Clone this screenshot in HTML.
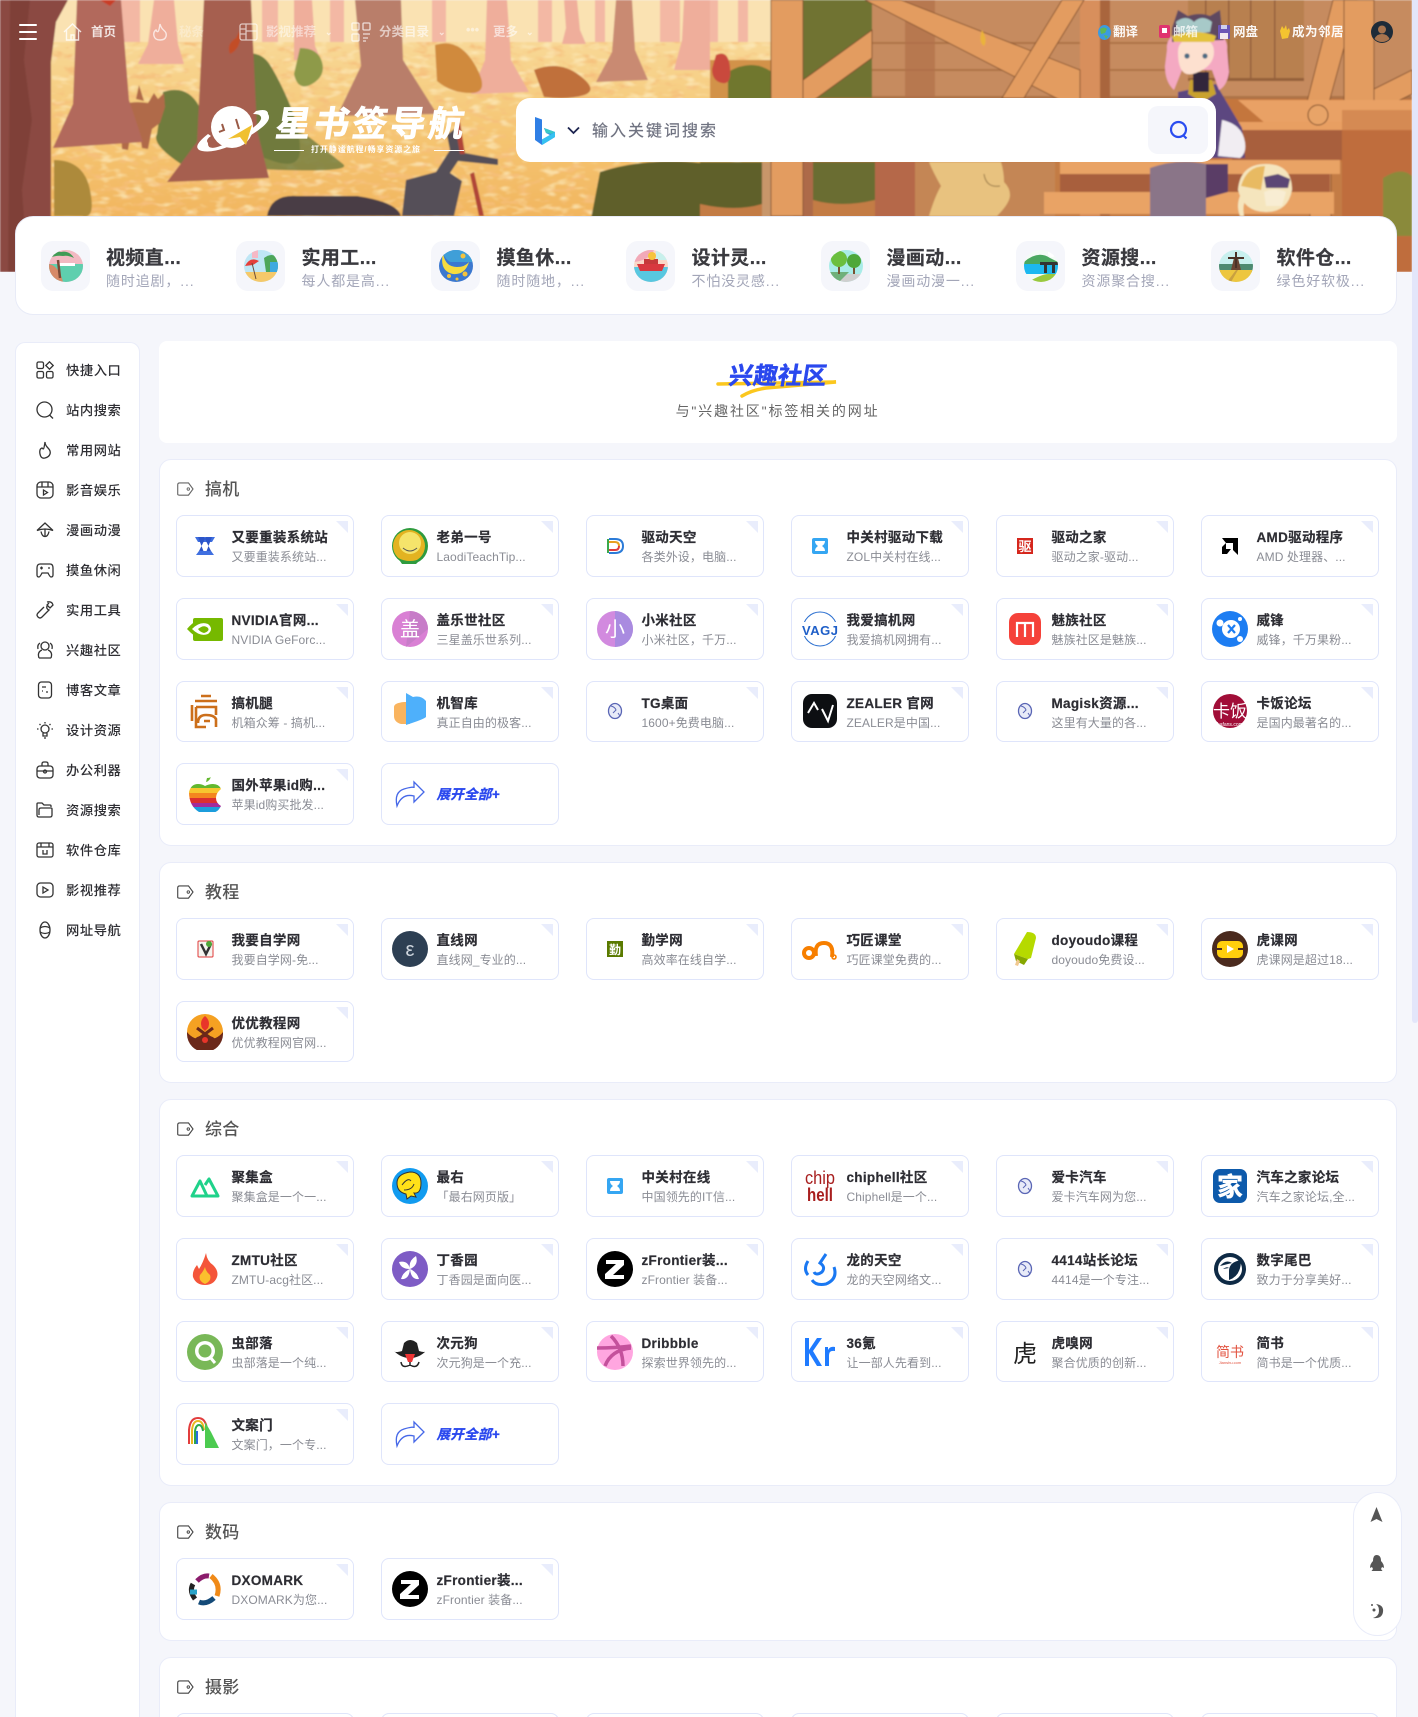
<!DOCTYPE html>
<html lang="zh"><head><meta charset="utf-8"><title>星书签导航</title>
<style>
*{box-sizing:border-box;margin:0;padding:0}
html,body{width:1418px;height:1717px;overflow:hidden;background:#f5f6fb}
body{position:relative;font-family:"Liberation Sans","Noto Sans CJK SC",sans-serif;color:#333}
.abs{position:absolute}
#sb{left:1412px;top:0;width:6px;height:1023px;background:#e3e6fa;border-radius:0 0 3px 3px}
#hd{left:0;top:0;width:1412px;height:272px;overflow:hidden}
.n{position:absolute;top:23px;line-height:18px;font-size:12.5px;font-weight:700;color:#fff;opacity:.82;white-space:nowrap}
.nr{opacity:.95}
#search{left:516px;top:98px;width:700px;height:64px;background:#fff;border-radius:14px}
#ph{left:592px;top:120px;font-size:16px;letter-spacing:2px;color:#6f7280;line-height:24px;-webkit-text-stroke:.2px #6f7280}
#sbtn{left:1148px;top:106px;width:60px;height:48px;background:#f5f6fb;border-radius:10px}
#cat{left:14.5px;top:216px;width:1382px;height:99px;background:#fff;border:1px solid #e8ebf7;border-radius:18px}
.ci{position:absolute;top:241px;width:49px;height:50px;background:#f5f6fb;border-radius:12px}
.ci svg{position:absolute;left:7.5px;top:9px}
.ct{position:absolute;top:246px;font-size:19px;font-weight:700;color:#3a3a3f;line-height:25px;letter-spacing:.4px;white-space:nowrap;-webkit-text-stroke:.25px #3a3a3f}
.cs{position:absolute;top:271px;font-size:14px;color:#a3a6b8;line-height:20px;letter-spacing:.85px;white-space:nowrap}
#side{left:15px;top:342px;width:125px;height:1375px;background:#fff;border:1px solid #e9ecf9;border-bottom:0;border-radius:10px 10px 0 0}
.si{position:absolute;left:36px;width:18px;height:18px}
.st{position:absolute;left:66px;font-size:13.3px;line-height:20px;color:#2e2e33;letter-spacing:.55px;font-weight:500;white-space:nowrap}
#title{left:158.5px;top:341px;width:1238px;height:102px;background:#fff;border-radius:8px}
#t1{left:0;width:1555px;text-align:center;top:361px;font-size:24px;line-height:32px;font-weight:700;color:#2a48ee;letter-spacing:.5px;-webkit-text-stroke:.5px #2a48ee}
#t1 span{display:inline-block;transform:skewX(-9deg)}
#t2{left:0;width:1555px;text-align:center;top:400px;font-size:14px;line-height:22px;color:#666;letter-spacing:1.85px}
#main{left:159px;top:459.3px;width:1237.5px;height:1257.7px;overflow:hidden}
.sec{position:relative;background:#fff;border:1px solid #e9ecf9;border-radius:12px;padding:55px 16px 20px;margin-bottom:16px}
.h{position:absolute;left:45px;top:18px;line-height:24px;font-size:17px;font-weight:500;color:#555;letter-spacing:.3px}
.tag{position:absolute;left:16px;top:22px}
.g{display:grid;grid-template-columns:repeat(6,178px);column-gap:27px;grid-auto-rows:61.7px;row-gap:21px}
.c{position:relative;background:#fff;border:1px solid #dfe5fb;border-radius:8px}
.c::after{content:"";position:absolute;right:5px;top:5px;border-style:solid;border-width:0 12px 12px 0;border-color:transparent #e9edfc transparent transparent}
.c>svg{position:absolute;left:9.5px;top:11.8px}
.c b{position:absolute;left:54.5px;top:12px;font-size:13.5px;line-height:20px;font-weight:700;color:#2d2d33;letter-spacing:.3px;white-space:nowrap;-webkit-text-stroke:.2px #2d2d33}
.c span{position:absolute;left:54.5px;top:31px;font-size:12px;line-height:20px;color:#8a8c94;letter-spacing:.1px;white-space:nowrap}
.x::after{display:none}
.x>svg{left:8px}
.x b{top:20.5px;left:54.5px;color:#2a48ee;font-style:italic;-webkit-text-stroke:.3px #2a48ee}
#fl{left:1352.5px;top:1492px;width:49px;height:144px;background:#fff;border:1px solid #e9ecf9;border-radius:25px}
</style></head><body>

<div class="abs" id="sb"></div>

<div class="abs" id="hd">
<svg width="1412" height="272" viewBox="0 0 1412 272" style="position:absolute;left:0;top:0">
<defs>
<linearGradient id="gd" x1="0" y1="0" x2="0" y2="1"><stop offset="0" stop-color="#f8d896"/><stop offset=".4" stop-color="#f5c572"/><stop offset="1" stop-color="#efab52"/></linearGradient>
<filter id="lf" x="0" y="0" width="100%" height="100%"><feTurbulence type="fractalNoise" baseFrequency=".06 .15" numOctaves="3" seed="5"/><feColorMatrix values="0 0 0 0 .92  0 0 0 0 .52  0 0 0 0 .2  3.5 0 0 0 -1.85"/></filter>
<filter id="lf2" x="0" y="0" width="100%" height="100%"><feTurbulence type="fractalNoise" baseFrequency=".07 .16" numOctaves="2" seed="11"/><feColorMatrix values="0 0 0 0 .98  0 0 0 0 .84  0 0 0 0 .52  0 3.5 0 0 -1.8"/></filter>
<filter id="bl"><feGaussianBlur stdDeviation=".7"/></filter>
</defs>
<g filter="url(#bl)">
<rect width="1412" height="272" fill="#c4763e"/>
<rect x="0" y="0" width="800" height="56" fill="#fae2b2"/>
<g fill="#f3b8a4">
<rect x="120" y="0" width="20" height="56"/><rect x="262" y="0" width="16" height="56"/><rect x="330" y="0" width="14" height="56"/><rect x="432" y="0" width="14" height="56"/><rect x="538" y="0" width="14" height="56"/><rect x="595" y="0" width="10" height="56"/><rect x="660" y="0" width="20" height="56"/><rect x="700" y="0" width="18" height="56"/><rect x="738" y="0" width="10" height="56"/>
</g>
<rect x="0" y="42" width="800" height="230" fill="url(#gd)"/>
<rect x="52" y="42" width="760" height="230" filter="url(#lf)"/>
<rect x="52" y="42" width="760" height="230" filter="url(#lf2)" opacity=".7"/>
<g fill="#efae9b">
<path d="M154 0h20l4 44 6 20h-46l10-20z"/><path d="M294 0h18l3 46 6 14h-27z"/><path d="M487 0h20l4 60 18 32-58 2 14-34z"/><path d="M564 0h13l3 30 6 14h-24l4-16z"/><path d="M684 0h26v70h-36l8-30z"/>
</g>
<path d="M616 0h16l3 50 13 30-52 2 16-30z" fill="#c98a72"/>
<g fill="#6f7b3c">
<path d="M240 55q20-6 30 10t20 40 10 45-30 10-30-10-14-50z"/><path d="M163 92q24-8 36 14t12 50-30 8-24-30z"/><path d="M253 130q40-6 60 10t30 24-60 6-30-14z" opacity=".8"/>
</g>
<path d="M300 48q18 0 22 14t-10 22-18-10z" fill="#8e9a48"/>
<path d="M534 70q25-10 45 5t5 20-40 2z" fill="#c0703a"/>
<path d="M435 45q24-8 40 20t-4 28-34-12z" fill="#d08a3c"/>
<path d="M600 172q50-16 110-8v60H590z" fill="#5e5f2c"/>
<path d="M54 160q30 0 36 30t-8 26H54z" fill="#ad8a3a"/>
<g fill="#b06a48"><path d="M118 108q10-8 30-5l6-10 4 6 6-6 1 14 -5 16-8 6-4 20-6-1-2-14-10 4-2 12-6-1-1-18z"/><path d="M139 85l5 16-8-2z"/></g>
<path d="M77 0h44l8 100 14 42-90 6 20-44z" fill="#b2695c"/>
<path d="M204 0h47l6 130 12 48-102 4 30-40z" fill="#a65e50"/>
<path d="M355 0h46l2 60 34 54-100 2 24-50z" fill="#b97e6b"/>
<path d="M0 0h68l-12 22-5 40v210H0z" fill="#8b4a42"/>
<path d="M10 0h20l-6 60 8 60-10 70 6 82H8z" fill="#7a3d36" opacity=".7"/>
<path d="M267 216q4-22 30-20l60 0q40 6 44 20z" fill="#4a3c44"/>
<path d="M447 135l10-8 8 26 33 6 0 6-40-4 -8 12 12 8 -8 35H402l4-36 30-8 14-22z" fill="#545058"/>
<path d="M455 125l5-3 5 32h-5z" fill="#b04538"/><path d="M474 172l10 44h-5l-9-42z" fill="#b04538"/>
<rect x="710" y="60" width="62" height="40" fill="#d2924a"/>
<path d="M728 72q24-14 44 0v30h-44z" fill="#70772f"/>
<path d="M716 55q12-6 14 12t-8 16-10-14z" fill="#c94a3c"/>
<rect x="700" y="162" width="712" height="110" fill="#c37b45"/>
<path d="M700 162h62v42q-26 8-62 0z" fill="#5f602c"/>
<rect x="762" y="162" width="31" height="110" fill="#c8966a"/><rect x="793" y="162" width="20" height="110" fill="#ad6a4a"/>
<path d="M813 162h62v38q-34 8-62 0z" fill="#6a6d32"/>
<rect x="875" y="162" width="40" height="110" fill="#b5684a"/>
<rect x="915" y="162" width="140" height="110" fill="#c48655"/>
<rect x="803" y="0" width="70" height="98" fill="#6f7330"/>
<rect x="872" y="0" width="540" height="98" fill="#c68b5e"/>
<g fill="#ae7346"><rect x="872" y="42" width="430" height="2"/><rect x="872" y="69" width="430" height="2"/><rect x="872" y="96" width="540" height="3"/></g>
<rect x="905" y="0" width="30" height="98" fill="#b07048" opacity=".7"/>
<rect x="1188" y="0" width="116" height="80" fill="#b88050"/>
<g fill="#94603a"><rect x="1205" y="0" width="1.5" height="80"/><rect x="1228" y="0" width="1.5" height="80"/><rect x="1250" y="0" width="1.5" height="80"/><rect x="1274" y="0" width="1.5" height="80"/><rect x="1188" y="78" width="116" height="3"/></g>
<rect x="1080" y="0" width="30" height="216" fill="#d88f5c"/><rect x="1100" y="0" width="10" height="216" fill="#a9653e"/>
<g fill="#e39c60" stroke="#7a4a2a" stroke-width=".8">
<path d="M865 0h36L1080 70v30h-20z"/><path d="M1062 0h22l-60 98h-22z"/><path d="M803 80l69-50v28l-69 50z"/>
<rect x="771" y="0" width="32" height="216"/>
<path d="M1333 0h24l-30 110h-22z"/><path d="M1412 70v24l-40 20v-24z"/>
<rect x="1344" y="0" width="30" height="112"/>
<rect x="1310" y="118" width="21" height="100"/>
</g>
<path d="M1238 100h174v24h-146z" fill="#e9a165"/>
<rect x="1238" y="122" width="104" height="8" fill="#e89f62"/>
<rect x="1232" y="130" width="110" height="30" fill="#a85e3c"/>
<rect x="1060" y="160" width="280" height="14" fill="#e9a365"/>
<rect x="1060" y="174" width="270" height="18" fill="#a85f3c"/>
<rect x="1044" y="192" width="290" height="22" fill="#e9a365"/>
<rect x="1342" y="130" width="70" height="142" fill="#bf6d3e"/>
<rect x="1342" y="110" width="70" height="20" fill="#d58a52"/>
<path d="M1383 178q18-12 29-2v60h-29z" fill="#8a8a3a"/>
<circle cx="1318" cy="115" r="10" fill="#e8a468" stroke="#7a4a2a"/>
<path d="M929 162h72q3 10 3 20 6 6 6 13 0 8-13 21h-68q6-20 12-30-8-14-12-24z" fill="#e8c27f"/>
<path d="M1000 186q-14 2-16-12" stroke="#9a7a48" fill="none"/>
<path d="M1150 168q28-10 56-4l0 60h-56z" fill="#8a7588"/>
<path d="M1206 164h22l0 28-22 6z" fill="#5a3c66"/>
<path d="M1178 92l38-8 26 44 3 30h-67z" fill="#5c4780"/>
<path d="M1222 120q18 4 22 18t-4 20l-22-2z" fill="#f1edf2"/>
<path d="M1190 80h22l4 14-14 8-14-8z" fill="#c9a22e"/>
<rect x="1193" y="72" width="16" height="20" fill="#33283a"/>
<path d="M1167 50q-2-20 30-20t30 20l2 22q-2 14-10 18l-7-20-30 0-8 20q-9-8-9-24z" fill="#f4a9c2"/>
<path d="M1178 52q0-14 18-14t18 14-18 21-18-21z" fill="#fde0cf"/>
<path d="M1172 28l6-18 10 6q12-4 22 0l10-6 2 20 2 10-52 2z" fill="#5e4a60"/>
<path d="M1176 22q10-8 18 0 8-8 18 0l-2 10-16 2-16-2z" fill="#a7c9c8"/>
<path d="M1172 36q24-8 44 0l-2 6h-40z" fill="#e3c23e"/>
<circle cx="1187" cy="56" r="2.600" fill="#4b6a82"/><circle cx="1205" cy="56" r="2.600" fill="#4b6a82"/>
<path d="M1238 190q2-26 28-26t26 26q-4 22-26 22t-28-22z" fill="#f5e5bd"/>
<path d="M1241 186q6-20 24-20l-4 24z" fill="#e8ba62"/>
<path d="M1264 177l14-3 12 5-2 9-22 0z" fill="#5b4774"/>
<path d="M1264 192q11-5 22 0l-4 14-16 0z" fill="#f8edd3"/>
<path d="M1240 196q-4 10 0 20h4q-2-10 2-18z" fill="#f5e5bd"/>
<path d="M236 38q8-16 4-6 2 16-10 22-4-10 6-16z" fill="#c24e28"/>
<path d="M982 30q6 10 2 16-6-4-2-16z" fill="#eab33a"/>
<path d="M100 0h16l-6 6z" fill="#c93e26"/>
</g>
</svg>

<svg class="abs" style="left:19px;top:24px" width="18" height="16" fill="#fff"><rect width="18" height="2" rx="1" y="0"/><rect width="18" height="2" rx="1" y="7"/><rect width="18" height="2" rx="1" y="14"/></svg>
<svg class="abs" style="left:63px;top:23px;opacity:.8" width="19" height="18" fill="none" stroke="#fff" stroke-width="1.4"><path d="M1 9l8.500-8 8.500 8M3.500 7v10h12V7M8 17v-5h3v5"/></svg>
<div class="n" style="left:91px">首页</div>
<svg class="abs" style="left:153px;top:23px;opacity:.7" width="14" height="18" fill="none" stroke="#fff" stroke-width="1.4"><path d="M7 1q1 4 4 6.500t2 6-6 3.500-6-4 2-6q1 2 2 1.500T7 1z"/></svg>
<div class="n" style="left:179px;opacity:.3">秘条</div>
<svg class="abs" style="left:239px;top:23px;opacity:.65" width="19" height="18" fill="none" stroke="#fff" stroke-width="1.3"><rect x="1" y="1" width="17" height="16" rx="2"/><path d="M7 1v16M1 6h6M1 11h6M7 8h11"/></svg>
<div class="n" style="left:266px;opacity:.5">影视推荐</div>
<div class="n" style="left:325px;opacity:.6;font-size:9px">⌄</div>
<svg class="abs" style="left:351px;top:22px;opacity:.75" width="20" height="20" fill="none" stroke="#fff" stroke-width="1.3"><rect x="1" y="1" width="7" height="7" rx="1"/><rect x="12" y="1" width="7" height="7" rx="1"/><rect x="1" y="12" width="7" height="7" rx="1"/><path d="M12 12h7M12 16h5M12 19h3"/></svg>
<div class="n" style="left:379px;opacity:.6">分类目录</div>
<div class="n" style="left:438px;opacity:.6;font-size:9px">⌄</div>
<div class="n" style="left:466px;top:21px;opacity:.5;letter-spacing:0">•••</div>
<div class="n" style="left:493px;opacity:.6">更多</div>
<div class="n" style="left:526px;opacity:.6;font-size:9px">⌄</div>

<svg class="abs" style="left:1098px;top:25px" width="13" height="15"><ellipse cx="6.500" cy="7.500" rx="6.500" ry="7.500" fill="#3b9be0"/><path d="M2 4q4-3 7 0l-2 4-4 1z" fill="#5cb85c"/><path d="M6 10l4 1-2 3z" fill="#5cb85c"/></svg>
<div class="n nr" style="left:1113px">翻译</div>
<svg class="abs" style="left:1159px;top:25px" width="11" height="13"><rect width="11" height="13" rx="2" fill="#e0336f"/><rect x="3" y="3" width="5" height="5" fill="#fff"/></svg>
<div class="n nr" style="left:1173px;opacity:.75">邮箱</div>
<svg class="abs" style="left:1218px;top:25px" width="12" height="14"><rect width="12" height="14" rx="1" fill="#6a55b5"/><rect x="2" y="8" width="8" height="6" fill="#f0e8ef"/><rect x="3" y="0" width="6" height="4" fill="#cfd0ef"/></svg>
<div class="n nr" style="left:1233px">网盘</div>
<svg class="abs" style="left:1278px;top:25px" width="12" height="14"><path d="M2 6l2-5 2 3 2-4 1 5 2-2 1 3-2 7-6 1z" fill="#f4c430"/></svg>
<div class="n nr" style="left:1292px;letter-spacing:.5px">成为邻居</div>
<svg class="abs" style="left:1371px;top:21px" width="22" height="22"><circle cx="11" cy="11" r="11" fill="#1e2b38"/><circle cx="11" cy="8.500" r="4" fill="#a8744e"/><path d="M3.500 18q2-5 7.500-5t7.500 5q-3.500 3-7.500 3t-7.500-3z" fill="#a8744e"/></svg>

<svg class="abs" style="left:196px;top:102px" width="76" height="56" viewBox="0 0 76 56">
<circle cx="36" cy="25" r="21" fill="#fff"/>
<path d="M12 32Q-6 46 6 49 22 52 50 36T72 12Q72 6 60 9l-3 3q9 0 8 5-2 7-28 21T12 41q-3-3 3-7z" fill="#fff"/>
<path d="M26 22l2 6-5 2M40 17l3 10" stroke="#9a5a46" stroke-width="2" fill="none"/>
<path d="M32 37l24-14-6 20-6-8z" fill="#f0c030"/>
</svg>
<div class="abs" style="left:276px;top:102px;font-size:35px;line-height:46px;font-weight:700;color:#fff;letter-spacing:3.2px;white-space:nowrap;-webkit-text-stroke:.7px #fff;transform:skewX(-9deg)">星书签导航</div>
<div class="abs" style="left:274px;top:150px;width:30px;height:1px;background:#fff"></div>
<div class="abs" style="left:434px;top:150px;width:30px;height:1px;background:#fff"></div>
<div class="abs" style="left:311px;top:144px;font-size:8px;line-height:12px;font-weight:700;color:#fff;letter-spacing:.9px;white-space:nowrap">打开静谧航程/畅享资源之旅</div>
</div>

<div class="abs" id="search"></div>
<svg class="abs" style="left:534px;top:116px" width="22" height="30" viewBox="0 0 22 30"><path d="M1 1l7 2.500v20l8-4.500-4-2-2-5 11 4v5L8 29 1 24z" fill="#2f7fe5"/><path d="M8 23.500l13-7.500v5L8 29z" fill="#35c1f1"/><path d="M10 12l11 4-4 2-5-1z" fill="#38c8c8"/></svg>
<svg class="abs" style="left:567px;top:126px" width="13" height="9" fill="none" stroke="#1d2550" stroke-width="1.8"><path d="M1 1.500l5.500 5.500L12 1.500"/></svg>
<div class="abs" id="ph">输入关键词搜索</div>
<div class="abs" id="sbtn"></div>
<svg class="abs" style="left:1169px;top:120px" width="20" height="20" fill="none" stroke="#2a4df0" stroke-width="2.200"><circle cx="9.500" cy="9.500" r="7.500"/><path d="M14 15l3.500 3.500"/></svg>

<div class="abs" id="cat"></div>
<div class="ci" style="left:41px"><svg width="34" height="32" viewBox="0 0 34 32"><defs><clipPath id="e"><ellipse cx="17" cy="16" rx="17" ry="16"/></clipPath></defs><g clip-path="url(#e)"><rect width="34" height="32" fill="#f2b9c2"/><rect y="14" width="34" height="18" fill="#5fcfae"/><rect x="10" y="13" width="16" height="3" fill="#fff"/><path d="M0 14q10 2 14 18H0z" fill="#d78a68"/><path d="M9 10l2 18" stroke="#7a4a36" stroke-width="2.500"/><path d="M0 8q6-8 12-6 8-2 13 6-6-3-11-2-7-1-14 2z" fill="#3f9b55"/></g></svg></div>
<div class="ci" style="left:236px"><svg width="34" height="32" viewBox="0 0 34 32"><g clip-path="url(#e)"><rect width="34" height="32" fill="#bfe6f5"/><path d="M0 22h34v10H0z" fill="#f5c96a"/><path d="M20 8q8-6 14 0v14H22z" fill="#4da65a"/><path d="M26 12h8v10h-8z" fill="#3fa9e0"/><path d="M1 16q5-10 14-5l-6 4z" fill="#e53f3a"/><path d="M8 13l4 16" stroke="#6a4a36" stroke-width="1"/><path d="M8 0h6v8H8z" fill="#f5b8c5"/></g></svg></div>
<div class="ci" style="left:431px"><svg width="34" height="32" viewBox="0 0 34 32"><g clip-path="url(#e)"><rect width="34" height="32" fill="#3b78cf"/><path d="M2 0h32v12H12q-4 0-10-12z" fill="#3f9fd8"/><path d="M4 3q2 14 14 14 8 0 12-5-4 13-16 12Q0 21 4 3z" fill="#f7dc3e"/><g fill="#f5c33c"><circle cx="24" cy="6" r="2.500"/><circle cx="10" cy="26" r="2"/><circle cx="26" cy="24" r="2.500"/><circle cx="18" cy="29" r="1.500"/></g></g></svg></div>
<div class="ci" style="left:626px"><svg width="34" height="32" viewBox="0 0 34 32"><g clip-path="url(#e)"><rect width="34" height="32" fill="#fad8c8"/><path d="M0 0h20q-4 10-20 12z" fill="#f2a9b8"/><path d="M22 0h12v10H22z" fill="#c8f0ec"/><rect y="17" width="34" height="15" fill="#58c7e0"/><path d="M3 14h28l-3 7H6z" fill="#d8393f"/><rect x="10" y="9" width="14" height="5" fill="#c53a3a"/><circle cx="18" cy="6" r="4" fill="#f6c33c"/></g></svg></div>
<div class="ci" style="left:821px"><svg width="34" height="32" viewBox="0 0 34 32"><g clip-path="url(#e)"><rect width="34" height="32" fill="#a9ece8"/><path d="M0 24h34v8H0z" fill="#cfcfcf"/><path d="M0 22l20 0-10 10H0z" fill="#6fb07a"/><path d="M10 10v14M25 12v12" stroke="#7a5230" stroke-width="2"/><circle cx="10" cy="9" r="8" fill="#6bbf3f"/><circle cx="25" cy="11" r="7" fill="#4ea83a"/></g></svg></div>
<div class="ci" style="left:1016px"><svg width="34" height="32" viewBox="0 0 34 32"><g clip-path="url(#e)"><rect width="34" height="32" fill="#f4fbf6"/><path d="M0 12q14-12 26-4l8 4v4H0z" fill="#4aa860"/><rect y="14" width="34" height="10" fill="#1cb8f0"/><path d="M4 32q14-8 20-8h10v8z" fill="#9ac93f"/><path d="M16 12h18v3H16zM20 15h3v8h-3zM28 15h3v8h-3z" fill="#333"/><circle cx="28" cy="3" r="4" fill="#fff"/></g></svg></div>
<div class="ci" style="left:1211px"><svg width="34" height="32" viewBox="0 0 34 32"><g clip-path="url(#e)"><rect width="34" height="32" fill="#c8f0ee"/><rect y="14" width="34" height="8" fill="#4d8a70"/><rect y="20" width="34" height="12" fill="#edc63f"/><path d="M17 20L8 32h4l7-12z" fill="#c9a040"/><path d="M15 8h4l3 12H12z" fill="#6a4632"/><path d="M17 2v16M9 8h16" stroke="#4a3226" stroke-width="2"/></g></svg></div>
<div class="ct" style="left:106px">视频直...</div><div class="cs" style="left:106px">随时追剧，...</div>
<div class="ct" style="left:301.5px">实用工...</div><div class="cs" style="left:301.5px">每人都是高...</div>
<div class="ct" style="left:496.5px">摸鱼休...</div><div class="cs" style="left:496.5px">随时随地，...</div>
<div class="ct" style="left:691.5px">设计灵...</div><div class="cs" style="left:691.5px">不怕没灵感...</div>
<div class="ct" style="left:886.5px">漫画动...</div><div class="cs" style="left:886.5px">漫画动漫一...</div>
<div class="ct" style="left:1081.5px">资源搜...</div><div class="cs" style="left:1081.5px">资源聚合搜...</div>
<div class="ct" style="left:1276.5px">软件仓...</div><div class="cs" style="left:1276.5px">绿色好软极...</div>

<div class="abs" id="side"></div>
<svg class="si" style="top:361px" viewBox="0 0 18 18" fill="none" stroke="#333" stroke-width="1.3"><rect x="1" y="1" width="6.500" height="6.500" rx="1.500"/><path d="M13.500 .8l3.700 3.700-3.700 3.700-3.700-3.700z"/><rect x="1" y="10.500" width="6.500" height="6.500" rx="1.500"/><rect x="10.500" y="10.500" width="6.500" height="6.500" rx="1.500"/></svg>
<svg class="si" style="top:401px" viewBox="0 0 18 18" fill="none" stroke="#333" stroke-width="1.3"><circle cx="8.500" cy="8.500" r="7.500"/><path d="M13.500 14l3.500 3.500"/></svg>
<svg class="si" style="top:441px" viewBox="0 0 18 18" fill="none" stroke="#333" stroke-width="1.3"><path d="M9 1q0 3 3 6t2 6-5 4-5-4 2-6q1 1 1.500 1T9 1z"/></svg>
<svg class="si" style="top:481px" viewBox="0 0 18 18" fill="none" stroke="#333" stroke-width="1.3"><rect x="1" y="1" width="16" height="16" rx="4"/><path d="M1 6h16M6 1v5M12 1v5M7.500 9l4 2.500-4 2.500z"/></svg>
<svg class="si" style="top:521px" viewBox="0 0 18 18" fill="none" stroke="#333" stroke-width="1.3"><path d="M1 9.500L9 2l8 7.500q-4-1.500-8-1.500t-8 1.500zM5 10.500q1 5 4 5t4-5M9 8v7.500"/></svg>
<svg class="si" style="top:561px" viewBox="0 0 18 18" fill="none" stroke="#333" stroke-width="1.3"><path d="M4 3h10q3 0 3 4v7q0 2-2 2-1 0-3-4H6q-2 4-3 4-2 0-2-2V7q0-4 3-4zM4 7h3M5.500 5.500v3M12 7h2"/></svg>
<svg class="si" style="top:601px" viewBox="0 0 18 18" fill="none" stroke="#333" stroke-width="1.3"><path d="M11 1q5-1 6 3l-3 3-3-3 2-2M11 5q-1 3 2 4L6 16q-2 2-4 0t0-4l6-6"/></svg>
<svg class="si" style="top:641px" viewBox="0 0 18 18" fill="none" stroke="#333" stroke-width="1.3"><circle cx="9" cy="5" r="4"/><path d="M3 17q-2-6 3-8M15 17q2-6-3-8M3 17h12M4 2q-3 2-2 6M14 2q3 2 2 6"/></svg>
<svg class="si" style="top:681px" viewBox="0 0 18 18" fill="none" stroke="#333" stroke-width="1.3"><rect x="2.500" y="1" width="13" height="16" rx="3"/><path d="M6 6h4M6 10h1M10 11h2"/></svg>
<svg class="si" style="top:721px" viewBox="0 0 18 18" fill="none" stroke="#333" stroke-width="1.3"><circle cx="9" cy="8" r="4"/><path d="M7 12v3h4v-3M8 17h2M9 1v1.500M1 8h1.500M15.500 8H17M3.500 3l1 1M14.500 3l-1 1"/></svg>
<svg class="si" style="top:761px" viewBox="0 0 18 18" fill="none" stroke="#333" stroke-width="1.3"><rect x="1" y="5" width="16" height="12" rx="3"/><path d="M6 5V3q0-2 2-2h2q2 0 2 2v2M1 10h16"/><circle cx="9" cy="10.500" r="1.500"/></svg>
<svg class="si" style="top:801px" viewBox="0 0 18 18" fill="none" stroke="#333" stroke-width="1.3"><path d="M1 14V3q0-1 1-1h4l2 2h6q1 0 1 1v1M1 14q0 2 2 2h11q2 0 2-2V8q0-1-1-1H5q-2 0-2 2v5"/></svg>
<svg class="si" style="top:841px" viewBox="0 0 18 18" fill="none" stroke="#333" stroke-width="1.3"><rect x="1" y="2" width="16" height="14" rx="2"/><path d="M1 6h16M5 6v-4M13 6v-4M7 9v4h4V9"/></svg>
<svg class="si" style="top:881px" viewBox="0 0 18 18" fill="none" stroke="#333" stroke-width="1.3"><rect x="1" y="2" width="16" height="14" rx="3.500"/><path d="M7 6l5 3-5 3z"/></svg>
<svg class="si" style="top:921px" viewBox="0 0 18 18" fill="none" stroke="#333" stroke-width="1.3"><ellipse cx="9" cy="9" rx="5" ry="8"/><path d="M4 7q5-3 10 0M4 11q5 3 10 0"/></svg>
<div class="st" style="top:361px">快捷入口</div>
<div class="st" style="top:401px">站内搜索</div>
<div class="st" style="top:441px">常用网站</div>
<div class="st" style="top:481px">影音娱乐</div>
<div class="st" style="top:521px">漫画动漫</div>
<div class="st" style="top:561px">摸鱼休闲</div>
<div class="st" style="top:601px">实用工具</div>
<div class="st" style="top:641px">兴趣社区</div>
<div class="st" style="top:681px">博客文章</div>
<div class="st" style="top:721px">设计资源</div>
<div class="st" style="top:761px">办公利器</div>
<div class="st" style="top:801px">资源搜索</div>
<div class="st" style="top:841px">软件仓库</div>
<div class="st" style="top:881px">影视推荐</div>
<div class="st" style="top:921px">网址导航</div>

<div class="abs" id="title"></div>
<svg class="abs" style="left:715px;top:375px" width="126" height="24"><path d="M3 9l118-2-70 6q-14 2-24 8" fill="none" stroke="#fbc71e" stroke-width="3.500" stroke-linecap="round"/></svg>
<div class="abs" id="t1"><span>兴趣社区</span></div>
<div class="abs" id="t2">与"兴趣社区"标签相关的网址</div>

<svg width="0" height="0" style="position:absolute"><defs>
<symbol id="gl" viewBox="0 0 36 36"><ellipse cx="18" cy="18" rx="6.500" ry="7.500" fill="#e8ebf8" stroke="#5a66b5" stroke-width="1.3"/><path d="M14 13q4 1 5 4l-3 3M21 20l2 3" stroke="#5a66b5" fill="none"/></symbol>
<symbol id="zf" viewBox="0 0 36 36"><circle cx="18" cy="18" r="18"/><path d="M9 9h18v5L16 24h11v4H8v-5l11-10H9z" fill="#fff"/></symbol>
<symbol id="zol" viewBox="0 0 36 36"><rect x="10" y="10" width="16" height="16" rx="2" fill="#35a6f2"/><path d="M13 13h10q0 3-3 5 3 2 3 5H13q0-3 3-5-3-2-3-5z" fill="#fff"/></symbol>
<symbol id="tg" viewBox="0 0 18 16"><path d="M.7 13V3q0-2 2-2h9.500l4.800 6.500-4.800 6.500H2.700q-2 0-2-1z" fill="none" stroke="currentColor" stroke-width="1.2"/><circle cx="12" cy="7.500" r="1.300" fill="none" stroke="currentColor"/></symbol>
<symbol id="exp" viewBox="0 0 36 36"><path d="M7 30q-3-14 7-17t10-1V6l10 10-10 10v-6q-12-3-17 10z" fill="none" stroke="#4668e8" stroke-width="1.3"/></symbol>
</defs></svg>

<div class="abs" id="main">

<div class="sec"><svg class="tag" width="19" height="15" color="#666"><use href="#tg"/></svg><div class="h">搞机</div><div class="g">
<div class="c"><svg width="36" height="36"><path d="M8 9h20l-3 5H11z" fill="#3f6fe0"/><path d="M11 9h6l9 18h-8zM25 9h-6l-9 18h8z" fill="#2c55c9"/><path d="M9 27h18l-3-4H12z" fill="#3f6fe0"/></svg><b>又要重装系统站</b><span>又要重装系统站...</span></div>
<div class="c"><svg width="36" height="36"><circle cx="18" cy="18" r="18" fill="#2e9b3e"/><circle cx="17" cy="18" r="16" fill="#e3b321"/><circle cx="18" cy="15" r="11" fill="#f5e46b"/><path d="M11 20q7 6 14 0" stroke="#555" fill="none"/><path d="M6 30q12 6 24 0l-6 6H10z" fill="#2e9b3e"/></svg><b>老弟一号</b><span>LaodiTeachTip...</span></div>
<div class="c"><svg width="36" height="36" fill="none" stroke-width="2"><path d="M12 11h6q8 0 8 7t-8 7h-6" stroke="#2b7bd8"/><path d="M12 14h6q4 0 4 4" stroke="#e8a020"/><path d="M12 22h6q4 0 4-4" stroke="#e03a3a"/><path d="M11 11v14" stroke="#3aa84a"/></svg><b>驱动天空</b><span>各类外设，电脑...</span></div>
<div class="c"><svg width="36" height="36"><use href="#zol"/></svg><b>中关村驱动下载</b><span>ZOL中关村在线...</span></div>
<div class="c"><svg width="36" height="36"><rect x="10" y="10" width="16" height="16" fill="#d5261c"/><text x="18" y="23" font-size="13" font-weight="700" fill="#fff" text-anchor="middle">驱</text></svg><b>驱动之家</b><span>驱动之家-驱动...</span></div>
<div class="c"><svg width="36" height="36"><path d="M10 10h16v17l-5-5v-7h-7zM10 19l4-4v6h5l-4 5h-5z"/></svg><b>AMD驱动程序</b><span>AMD 处理器、...</span></div>
<div class="c"><svg width="36" height="36"><rect x="6" y="7" width="30" height="23" rx="2" fill="#76b900"/><path d="M0 18q9-11 20-11v23Q9 28 0 18z" fill="#76b900"/><path d="M5 18q8-8 16-5 6 5 0 10-8 3-16-5z" fill="#fff"/><path d="M11 18q6-5 10-1 2 3-4 5-4-1-6-4z" fill="#76b900"/></svg><b>NVIDIA官网...</b><span>NVIDIA GeForc...</span></div>
<div class="c"><svg width="36" height="36"><circle cx="18" cy="18" r="18" fill="#d980d4"/><path d="M18 0a18 18 0 0 1 18 18L14 36z" fill="#c77cc8"/><text x="18" y="25" font-size="20" fill="#fff" text-anchor="middle">盖</text></svg><b>盖乐世社区</b><span>三星盖乐世系列...</span></div>
<div class="c"><svg width="36" height="36"><circle cx="18" cy="18" r="18" fill="#d28adf"/><path d="M18 0a18 18 0 0 1 0 36z" fill="#a98be0"/><text x="18" y="25" font-size="20" fill="#fff" text-anchor="middle">小</text></svg><b>小米社区</b><span>小米社区，千万...</span></div>
<div class="c"><svg width="36" height="36"><circle cx="18" cy="18" r="17" fill="#fff" stroke="#2a6fd0"/><rect y="11" width="36" height="14" fill="#fff"/><text x="18" y="24" font-size="13" font-weight="700" fill="#1f5fc8" text-anchor="middle" textLength="36">VAGJ</text></svg><b>我爱搞机网</b><span>我爱搞机网拥有...</span></div>
<div class="c"><svg width="36" height="36"><rect width="32" height="32" x="2" y="2" rx="9" fill="#f5423a"/><path d="M10 26V12h16v14M18 12v14" stroke="#fff" stroke-width="2.200" fill="none"/></svg><b>魅族社区</b><span>魅族社区是魅族...</span></div>
<div class="c"><svg width="36" height="36"><circle cx="18" cy="18" r="18" fill="#1d7df2"/><circle cx="19" cy="18" r="9" fill="#fff"/><circle cx="8" cy="12" r="3.500" fill="#fff"/><circle cx="28" cy="8" r="2" fill="#fff"/><circle cx="28" cy="28" r="3" fill="#fff"/><path d="M16 14l7 8M23 14l-7 8" stroke="#1d7df2" stroke-width="2.200"/></svg><b>威锋</b><span>威锋，千万果粉...</span></div>
<div class="c"><svg width="36" height="36" fill="none" stroke="#cc6f1b" stroke-width="2.600"><path d="M14 3h10M8 8h22M5 12v16M9 14h20v8M9 14v20h10M11 30q0-8 8-8t10 4v8M17 28l6 0"/></svg><b>搞机腿</b><span>机箱众筹 - 搞机...</span></div>
<div class="c"><svg width="36" height="36"><path d="M2 14q0-4 10-5h6v22l-6 0-3 0q-7-2-7-8z" fill="#f9b45f"/><path d="M14 0l7 4q8-2 13 4v16q-2 2-14 6l-6 2z" fill="#4eb0fb"/></svg><b>机智库</b><span>真正自由的极客...</span></div>
<div class="c"><svg width="36" height="36"><use href="#gl"/></svg><b>TG桌面</b><span>1600+免费电脑...</span></div>
<div class="c"><svg width="36" height="36"><rect width="34" height="34" x="1" y="1" rx="9" fill="#0d0f12"/><path d="M6 20l6-10 4 7M20 16l6 12 5-16" stroke="#fff" stroke-width="2" fill="none"/></svg><b>ZEALER 官网</b><span>ZEALER是中国...</span></div>
<div class="c"><svg width="36" height="36"><use href="#gl"/></svg><b>Magisk资源...</b><span>这里有大量的各...</span></div>
<div class="c"><svg width="36" height="36"><circle cx="18" cy="18" r="17" fill="#a10e38"/><text x="18" y="24" font-size="17" fill="#fff" text-anchor="middle">卡饭</text><text x="18" y="33" font-size="5" fill="#fff" text-anchor="middle">kafans.com</text></svg><b>卡饭论坛</b><span>是国内最著名的...</span></div>
<div class="c"><svg width="36" height="36"><path d="M20 2q4 0 4-2-1 5-5 6z" fill="#64b82f"/><clipPath id="ap"><path d="M2 16q2-8 9-8 4 0 7 2 4-2 8-2 6 0 8 5-5 4-5 9t5 8q-4 8-10 6h-12Q2 30 2 16z"/></clipPath><g clip-path="url(#ap)"><rect y="5" width="36" height="7" fill="#62b82e"/><rect y="12" width="36" height="5" fill="#f7c62f"/><rect y="17" width="36" height="5" fill="#f4861f"/><rect y="22" width="36" height="5" fill="#dc2f2f"/><rect y="27" width="36" height="4" fill="#a32b9b"/><rect y="31" width="36" height="5" fill="#1c9ddc"/></g></svg><b>国外苹果id购...</b><span>苹果id购买批发...</span></div>
<div class="c x"><svg width="36" height="36"><use href="#exp"/></svg><b>展开全部+</b></div>
</div></div>

<div class="sec"><svg class="tag" width="19" height="15" color="#444"><use href="#tg"/></svg><div class="h">教程</div><div class="g">
<div class="c"><svg width="36" height="36"><rect x="11" y="10" width="15" height="16" rx="1" fill="#f5f5f0" stroke="#e03a3a"/><path d="M14 13l5 10 5-10" stroke="#333" stroke-width="2.500" fill="none"/><circle cx="22" cy="13" r="3" fill="#4ea83a"/></svg><b>我要自学网</b><span>我要自学网-免...</span></div>
<div class="c"><svg width="36" height="36"><circle cx="18" cy="18" r="18" fill="#2d3f53"/><text x="18" y="25" font-size="20" fill="#cfd6de" text-anchor="middle">ε</text></svg><b>直线网</b><span>直线网_专业的...</span></div>
<div class="c"><svg width="36" height="36"><rect x="10" y="10" width="16" height="16" fill="#5a7a00"/><text x="18" y="23" font-size="12" font-weight="700" fill="#fff" text-anchor="middle">勤</text></svg><b>勤学网</b><span>高效率在线自学...</span></div>
<div class="c"><svg width="36" height="36" fill="none" stroke="#f77f00" stroke-width="4"><circle cx="7" cy="22" r="5"/><path d="M14 25q-2-13 8-13t8 14"/><circle cx="32" cy="26" r=".8"/></svg><b>巧匠课堂</b><span>巧匠课堂免费的...</span></div>
<div class="c"><svg width="36" height="36"><path d="M20 1q9 0 9 6l-5 20-3 1-14-5z" fill="#b6da00"/><path d="M7 23l14 5-4 6-8-4z" fill="#86a700"/><path d="M10 28l-2 6 3 1 2-5z" fill="#f0c890"/></svg><b>doyoudo课程</b><span>doyoudo免费设...</span></div>
<div class="c"><svg width="36" height="36"><circle cx="18" cy="18" r="18" fill="#4a2a1e"/><rect x="5" y="10" width="26" height="17" rx="5" fill="#ffcf0d"/><path d="M15 14l7 4-7 4z" fill="#fff"/><path d="M14 8h8M5 18h5M26 18h5" stroke="#4a2a1e" stroke-width="2"/></svg><b>虎课网</b><span>虎课网是超过18...</span></div>
<div class="c"><svg width="36" height="36"><circle cx="18" cy="18" r="18" fill="#f5a122"/><path d="M0 18q6 8 18 8t18-8v2a18 18 0 0 1-36 0z" fill="#6b281a"/><path d="M4 28q14-14 28 0-6 8-14 8T4 28z" fill="#6b281a"/><path d="M10 14l16 12M26 14L10 26" stroke="#6b281a" stroke-width="3"/><path d="M18 2q6 5 3 12l-3 3-3-3q-3-7 3-12z" fill="#e8352a"/><circle cx="18" cy="26" r="3" fill="#e8352a"/></svg><b>优优教程网</b><span>优优教程网官网...</span></div>
</div></div>

<div class="sec"><svg class="tag" width="19" height="15" color="#444"><use href="#tg"/></svg><div class="h">综合</div><div class="g">
<div class="c"><svg width="36" height="36" fill="none" stroke="#1fd28a" stroke-width="3" stroke-linejoin="round"><path d="M5 28L13 13l7 15zM20 28h11L22 11l-4 6"/></svg><b>聚集盒</b><span>聚集盒是一个一...</span></div>
<div class="c"><svg width="36" height="36"><circle cx="18" cy="18" r="18" fill="#119bef"/><path d="M18 4q11 0 11 11t-7 10l2 4-5-1-4 3-1-5q-9-2-9-11T18 4z" fill="#ffe118" stroke="#333"/><path d="M10 17q6-8 9-4M12 22q8 0 10-6" stroke="#333" fill="none"/></svg><b>最右</b><span>「最右网页版」</span></div>
<div class="c"><svg width="36" height="36"><use href="#zol"/></svg><b>中关村在线</b><span>中国领先的IT信...</span></div>
<div class="c"><svg width="36" height="36"><text x="18" y="16" font-size="18" fill="#a81e1e" text-anchor="middle" textLength="30" lengthAdjust="spacingAndGlyphs">chip</text><text x="18" y="33" font-size="18" font-weight="700" fill="#a81e1e" text-anchor="middle" textLength="26" lengthAdjust="spacingAndGlyphs">hell</text></svg><b>chiphell社区</b><span>Chiphell是一个...</span></div>
<div class="c"><svg width="36" height="36"><use href="#gl"/></svg><b>爱卡汽车</b><span>爱卡汽车网为您...</span></div>
<div class="c"><svg width="36" height="36"><rect width="34" height="34" x="1" y="1" rx="7" fill="#0d5aab"/><text x="18" y="28" font-size="26" font-weight="900" fill="#fff" text-anchor="middle">家</text></svg><b>汽车之家论坛</b><span>汽车之家论坛,全...</span></div>
<div class="c"><svg width="36" height="36"><path d="M19 2q1 8 7 12 6 6 4 12-3 8-12 8t-12-8q-1-6 4-12l2 4q4-6 7-16z" fill="#f4553a"/><path d="M18 16q1 5 5 8 2 6-5 9-7-3-5-9 3-3 5-8z" fill="#fbc02d"/></svg><b>ZMTU社区</b><span>ZMTU-acg社区...</span></div>
<div class="c"><svg width="36" height="36"><circle cx="18" cy="18" r="18" fill="#7e5cc5"/><g fill="#fff"><path d="M18 18q-2-8 6-13 3 9-6 13zM18 18q-9 0-11-7 9-2 11 7zM18 18q-7 3-9 10 8 1 9-10zM18 18q7 3 9 10-8 1-9-10z"/></g></svg><b>丁香园</b><span>丁香园是面向医...</span></div>
<div class="c"><svg width="36" height="36"><use href="#zf"/></svg><b>zFrontier装...</b><span>zFrontier 装备...</span></div>
<div class="c"><svg width="36" height="36" fill="none" stroke="#1a78f2" stroke-width="3"><path d="M6 10q-5 8 0 14M24 3l-6 9q6 4 2 9-6 4-8 0M32 16q4 12-8 17-10 2-14-4"/></svg><b>龙的天空</b><span>龙的天空网络文...</span></div>
<div class="c"><svg width="36" height="36"><use href="#gl"/></svg><b>4414站长论坛</b><span>4414是一个专注...</span></div>
<div class="c"><svg width="36" height="36"><circle cx="18" cy="18" r="16" fill="#0e2a45"/><circle cx="18" cy="18" r="12" fill="#fff"/><path d="M17 32V20q0-9 12-11 0 16-12 20zM8 15q6-7 12-3M11 18q4-3 6-1" fill="#0e2a45"/></svg><b>数字尾巴</b><span>致力于分享美好...</span></div>
<div class="c"><svg width="36" height="36"><circle cx="18" cy="18" r="18" fill="#79b858"/><circle cx="18" cy="17" r="10" fill="#fff"/><circle cx="18" cy="17" r="6.500" fill="#79b858"/><path d="M23 23l5 6" stroke="#fff" stroke-width="3"/></svg><b>虫部落</b><span>虫部落是一个纯...</span></div>
<div class="c"><svg width="36" height="36"><path d="M12 9q6-6 13 0l2 8q6 2 7 0-7 7-16 7T2 17q1 2 8 0z" fill="#222"/><path d="M13 20h10l-3 8h-4z" fill="#ee3434"/><path d="M18 28v3M9 28q1 7 9 3 7 4 9-3" stroke="#222" stroke-width="1.5" fill="none"/></svg><b>次元狗</b><span>次元狗是一个充...</span></div>
<div class="c"><svg width="36" height="36"><circle cx="18" cy="18" r="18" fill="#ffa6e0"/><path d="M0 14q18 0 34-2M14 2q12 12 12 30M34 14q-20 2-26 18" stroke="#c4519c" stroke-width="3.5" fill="none"/></svg><b>Dribbble</b><span>探索世界领先的...</span></div>
<div class="c"><svg width="36" height="36" fill="#1f7bff"><path d="M3 4h4v12l8-12h5L11 17l9 15h-5L7 19v13H3zM23 13h3v3q2-4 7-3v4q-6-1-6 4v11h-4z"/></svg><b>36氪</b><span>让一部人先看到...</span></div>
<div class="c"><svg width="36" height="36"><text x="18" y="28" font-size="24" fill="#222" text-anchor="middle">虎</text></svg><b>虎嗅网</b><span>聚合优质的创新...</span></div>
<div class="c"><svg width="36" height="36"><text x="18" y="23" font-size="14" fill="#e2523f" text-anchor="middle">简书</text><text x="18" y="30" font-size="4" fill="#e2523f" text-anchor="middle">Jianshu.com</text></svg><b>简书</b><span>简书是一个优质...</span></div>
<div class="c"><svg width="36" height="36" fill="none" stroke-width="2"><path d="M2 28V14q1-12 9-12t9 12" stroke="#e23d3d"/><path d="M5 28V14q1-9 6-9t6 9" stroke="#e8b820"/><path d="M8 28V15q1-6 4-6t4 6" stroke="#2ca84a"/><path d="M10 28V15" stroke="#2b6be0"/><path d="M18 6l6 10 8 16H18z" fill="#4ccb50" stroke="none"/></svg><b>文案门</b><span>文案门，一个专...</span></div>
<div class="c x"><svg width="36" height="36"><use href="#exp"/></svg><b>展开全部+</b></div>
</div></div>

<div class="sec"><svg class="tag" width="19" height="15" color="#444"><use href="#tg"/></svg><div class="h">数码</div><div class="g">
<div class="c"><svg width="36" height="36" fill="none" stroke-width="5"><path d="M10 10q6-6 12-5" stroke="#8b1c6c"/><path d="M24 5q10 8 6 20" stroke="#f08a18"/><path d="M27 27q-8 7-15 4" stroke="#144a78"/><path d="M8 28q-6-8-2-15" stroke="#222"/><path d="M3 21h7" stroke="#2aa3c8"/></svg><b>DXOMARK</b><span>DXOMARK为您...</span></div>
<div class="c"><svg width="36" height="36"><use href="#zf"/></svg><b>zFrontier装...</b><span>zFrontier 装备...</span></div>
</div></div>

<div class="sec"><svg class="tag" width="19" height="15" color="#444"><use href="#tg"/></svg><div class="h">摄影</div><div class="g">
<div class="c"></div><div class="c"></div><div class="c"></div><div class="c"></div><div class="c"></div><div class="c"></div>
</div></div>
</div>

<div class="abs" id="fl"></div>
<svg class="abs" style="left:1369px;top:1507px" width="15" height="16" fill="#555"><path d="M7.500 0l6 15-6-3-6 3z"/></svg>
<svg class="abs" style="left:1369px;top:1555px" width="15" height="16" fill="#555"><path d="M7.500 0q4.500 0 4.500 6 3 3 3 7l-2-1-1 2 1.500 2H2.500L4 14l-1-2-2 1q0-4 3-7 0-6 3.500-6z"/></svg>
<svg class="abs" style="left:1369px;top:1603px" width="15" height="16" fill="#555"><path d="M7 1q8 1 7 8t-10 6q6-2 6-7t-3-7z"/><circle cx="5" cy="7" r="1.500"/><circle cx="3" cy="2" r="1"/></svg>
</body></html>
